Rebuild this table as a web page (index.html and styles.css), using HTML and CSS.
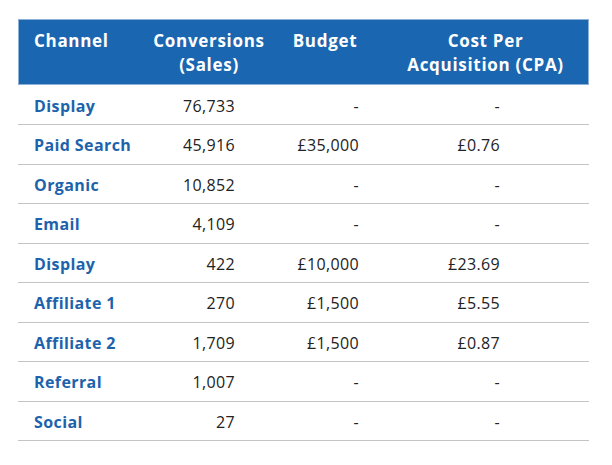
FILE: index.html
```html
<!DOCTYPE html>
<html>
<head>
<meta charset="utf-8">
<link rel="stylesheet" href="styles.css">
</head>
<body>
<div class="wrap">
<table class="cpa">
  <colgroup>
    <col class="c1"><col class="c2"><col class="c3"><col class="c4">
  </colgroup>
  <thead>
    <tr>
      <th class="ch">Channel</th>
      <th>Conversions<br>(Sales)</th>
      <th>Budget</th>
      <th>Cost Per<br>Acquisition (CPA)</th>
    </tr>
  </thead>
  <tbody>
    <tr><td class="name">Display</td><td class="n2">76,733</td><td class="n3">-</td><td class="n4">-</td></tr>
    <tr><td class="name">Paid Search</td><td class="n2">45,916</td><td class="n3">£35,000</td><td class="n4">£0.76</td></tr>
    <tr><td class="name">Organic</td><td class="n2">10,852</td><td class="n3">-</td><td class="n4">-</td></tr>
    <tr><td class="name">Email</td><td class="n2">4,109</td><td class="n3">-</td><td class="n4">-</td></tr>
    <tr><td class="name">Display</td><td class="n2">422</td><td class="n3">£10,000</td><td class="n4">£23.69</td></tr>
    <tr><td class="name">Affiliate 1</td><td class="n2">270</td><td class="n3">£1,500</td><td class="n4">£5.55</td></tr>
    <tr><td class="name">Affiliate 2</td><td class="n2">1,709</td><td class="n3">£1,500</td><td class="n4">£0.87</td></tr>
    <tr><td class="name">Referral</td><td class="n2">1,007</td><td class="n3">-</td><td class="n4">-</td></tr>
    <tr><td class="name">Social</td><td class="n2">27</td><td class="n3">-</td><td class="n4">-</td></tr>
  </tbody>
</table>
</div>
</body>
</html>
```
FILE: styles.css
```css
html, body {
  margin: 0;
  padding: 0;
  background: #ffffff;
}
.wrap {
  padding: 19px 0 0 18px;
}
.cpa {
  border-collapse: collapse;
  table-layout: fixed;
  width: 571px;
  font-family: "Open Sans", "Noto Sans", sans-serif;
}
.c1 { width: 132px; }
.c2 { width: 118px; }
.c3 { width: 114px; }
.c4 { width: 207px; }
.cpa thead tr {
  background: #1b66b0;
  outline: 1px solid #8db0d9;
  outline-offset: -1px;
}
.cpa th {
  color: #ffffff;
  font-weight: 700;
  font-size: 17px;
  letter-spacing: 0.7px;
  line-height: 24px;
  text-align: center;
  vertical-align: top;
  padding: 10px 0 8px 0;
  height: 48px;
}
.cpa th.ch {
  text-align: left;
  padding-left: 16px;
}
.cpa td {
  box-sizing: border-box;
  height: 39.5px;
  padding: 2px 0 0 0;
  font-size: 16px;
  letter-spacing: 0.35px;
  color: #222222;
  border-bottom: 1px solid #c4c4c4;
  vertical-align: middle;
}
.cpa td.name {
  padding-left: 16px;
  font-weight: 700;
  letter-spacing: 0.4px;
  color: #1d63ac;
}
.cpa td.n2 { text-align: right; padding-right: 33px; }
.cpa td.n3 { text-align: right; padding-right: 23px; }
.cpa td.n4 { text-align: right; padding-right: 89px; }
```
